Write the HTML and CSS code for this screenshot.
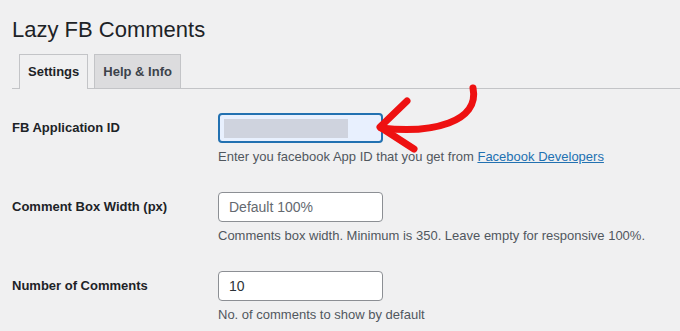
FILE: index.html
```html
<!DOCTYPE html>
<html lang="en">
<head>
    <meta charset="UTF-8">
    <meta name="viewport" content="width=device-width, initial-scale=1.0">
    <title>Lazy FB Comments</title>
    <link rel="stylesheet" href="styles.css">
</head>
<body>
    <div class="wrap">
        <h1>Lazy FB Comments</h1>

        <nav class="tabs">
            <a class="tab active" href="#">Settings</a>
            <a class="tab" href="#">Help &amp; Info</a>
        </nav>

        <div class="settings">
            <div class="row">
                <label for="appId">FB Application ID</label>
                <div class="field">
                    <div class="input focused" id="appId"><span class="blur"></span></div>
                    <p class="desc">Enter you facebook App ID that you get from <a href="#">Facebook Developers</a></p>
                </div>
            </div>

            <div class="row">
                <label for="boxWidth">Comment Box Width (px)</label>
                <div class="field">
                    <input class="input" id="boxWidth" type="text" placeholder="Default 100%">
                    <p class="desc">Comments box width. Minimum is 350. Leave empty for responsive 100%.</p>
                </div>
            </div>

            <div class="row">
                <label for="numComments">Number of Comments</label>
                <div class="field">
                    <input class="input" id="numComments" type="text" value="10">
                    <p class="desc">No. of comments to show by default</p>
                </div>
            </div>
        </div>

        <!-- hand-drawn arrow pointing at the first field -->
        <svg class="arrow" width="120" height="80" viewBox="360 80 120 80">
            <path d="M473 88 C480 122 432 134 381 128" />
            <path d="M407 101 L380 127 L414 149" />
        </svg>
    </div>
</body>
</html>
```

FILE: styles.css
```css
body {
    margin: 0;
    background: #f0f0f1;
    font-family: "Liberation Sans", Arial, sans-serif;
    color: #1d2327;
}
.wrap {
    position: relative;
    padding: 0 0 0 12px;
}
h1 {
    margin: 0;
    padding: 16px 0 0;
    font-size: 22px;
    font-weight: 400;
    line-height: 28px;
}
.tabs {
    display: flex;
    gap: 6px;
    margin-top: 10px;
    padding-left: 7px;
    border-bottom: 1px solid #c3c4c7;
}
.tab {
    display: block;
    padding: 0 8px;
    height: 33px;
    line-height: 33px;
    font-size: 13px;
    font-weight: 700;
    color: #3c434a;
    text-decoration: none;
    background: #dcdcde;
    border: 1px solid #c3c4c7;
    border-bottom: none;
    margin-bottom: -1px;
}
.tab.active {
    background: #f0f0f1;
    color: #1d2327;
    height: 34px;
}
.settings {
    padding-top: 24px;
}
.row {
    display: flex;
    margin-bottom: 25px;
}
.row:last-child {
    margin-bottom: 0;
}
.row label {
    width: 206px;
    flex: none;
    font-size: 13px;
    font-weight: 700;
    line-height: 30px;
}
.input {
    box-sizing: border-box;
    display: block;
    width: 165px;
    height: 30px;
    margin: 0;
    padding: 0 10px;
    font: 14px "Liberation Sans", Arial, sans-serif;
    color: #2c3338;
    background: #fff;
    border: 1px solid #8c8f94;
    border-radius: 4px;
}
.input::placeholder {
    color: #646970;
}
.input.focused {
    border: 2px solid #2271b1;
    background: #e8f0fe;
    padding: 4px;
}
.blur {
    display: block;
    width: 124px;
    height: 19px;
    background: #cfd3de;
}
.desc {
    margin: 4px 0 0;
    font-size: 13px;
    line-height: 20px;
    color: #50575e;
}
.desc a {
    color: #2271b1;
}
.arrow {
    position: absolute;
    left: 360px;
    top: 80px;
    fill: none;
    stroke: #ee1111;
    stroke-width: 7;
    stroke-linecap: round;
    stroke-linejoin: round;
}
```
